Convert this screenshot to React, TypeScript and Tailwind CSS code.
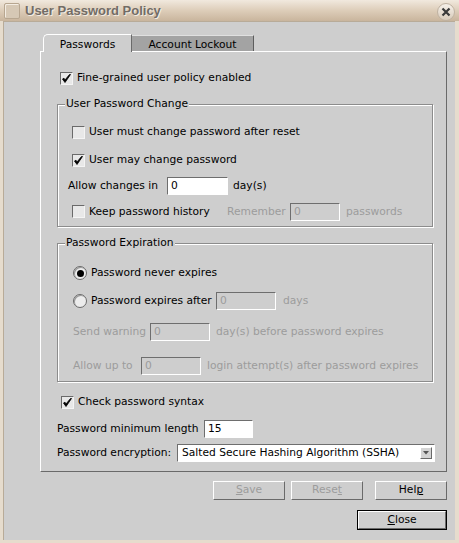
import React from "react";

const Check = ({ checked }: { checked?: boolean }) => (
    <span className="w-[13px] h-[13px] shrink-0 flex items-center justify-center border border-t-[#6a6a6a] border-l-[#6a6a6a] border-b-[#f4f4f4] border-r-[#f4f4f4] bg-[#e8e8e8]">
        {checked && (
            <svg width="9" height="9" viewBox="0 0 9 9">
                <path d="M0.5 5 L3 8.5 L8.5 0.5 L7.5 0.5 L3 6 L2 4.2 Z" fill="#000" stroke="#000" strokeWidth="0.8" strokeLinejoin="round" />
            </svg>
        )}
    </span>
);

const Radio = ({ on }: { on?: boolean }) => (
    <span className="w-[14px] h-[14px] shrink-0 rounded-full flex items-center justify-center border border-[#6a6a6a] bg-[#ececec] shadow-[inset_1px_1px_0_#9a9a9a]">
        {on && <span className="w-[7px] h-[7px] rounded-full bg-black" />}
    </span>
);

const Field = ({ value, disabled, w }: { value: string; disabled?: boolean; w: string }) => (
    <span
        className={
            "h-[18px] flex items-center pl-[3px] border border-t-[#6e6e6e] border-l-[#6e6e6e] border-b-white border-r-white " +
            w +
            (disabled ? " bg-[#cecece] text-[#9c9c9c]" : " bg-white text-black")
        }
    >
        {value}
    </span>
);

const Btn = ({ children, w, disabled, main }: { children: React.ReactNode; w: string; disabled?: boolean; main?: boolean }) => (
    <span className={"flex " + (main ? "border border-black" : "")}>
        <span
            className={
                "flex items-center justify-center border border-t-white border-l-white border-b-[#6a6a6a] border-r-[#6a6a6a] bg-[#cecece] " +
                w +
                (main ? " h-[18px]" : " h-[19px]") +
                (disabled ? " text-[#9c9c9c]" : " text-black")
            }
        >
            {children}
        </span>
    </span>
);

const Group = ({ title, h, children }: { title: string; h: string; children: React.ReactNode }) => (
    <div className={"relative w-[376px] border border-[#8c8c8c] shadow-[inset_1px_1px_0_#fff,1px_1px_0_#fff] " + h}>
        <span className="absolute left-[7px] top-[-8px] bg-[#cecece] px-[1px] leading-[14px]">{title}</span>
        {children}
    </div>
);

export default function App() {
    return (
        <div className="w-[459px] h-[543px] flex flex-col bg-[#e6dccd] font-['DejaVu_Sans',sans-serif] text-[10.7px] text-black overflow-hidden">
            {/* title bar */}
            <div className="h-[21px] shrink-0 flex items-center px-[4px] bg-gradient-to-b from-[#f1e9de] via-[#ddcdb9] to-[#c9b59d]">
                <span className="w-[16px] h-[16px] rounded-[2px] border border-[#b7a690] bg-[#d6c8b5] shadow-[inset_1px_1px_0_#f3ece2]" />
                <span className="ml-[5px] font-['Liberation_Sans',sans-serif] font-bold text-[13px] text-[#726c66] [text-shadow:1px_1px_0_#f3ece3]">
                    User Password Policy
                </span>
                <span className="ml-auto w-[18px] h-[18px] mt-[3px] rounded-full border border-[#bfb2a2] bg-gradient-to-b from-[#f6f1ea] to-[#d8cbbb] flex items-center justify-center">
                    <svg width="10" height="10" viewBox="0 0 10 10">
                        <path d="M1.5 1.5 L8.5 8.5 M8.5 1.5 L1.5 8.5" stroke="#3a3a3a" strokeWidth="2.2" />
                    </svg>
                </span>
            </div>

            {/* body */}
            <div className="flex-1 ml-[3px] mr-[4px] mb-[3px] bg-[#cecece] pl-[37px] pt-[13px] shadow-[inset_1px_1px_0_#b8ab98]">
                {/* tabs */}
                <div className="flex items-end h-[17px]">
                    <div className="relative z-10 w-[89px] h-[18px] mb-[-1px] ml-[3px] flex items-start justify-center pt-[2px] bg-[#cecece] border-l border-t border-white border-r border-r-[#6a6a6a] rounded-tl-[5px]">
                        Passwords
                    </div>
                    <div className="w-[122px] h-[16px] flex items-start justify-center pt-[1px] bg-[#a3a3a3] border-t border-[#e0e0e0] border-r border-r-[#5e5e5e]">
                        Account Lockout
                    </div>
                </div>

                {/* panel */}
                <div className="w-[407px] h-[421px] border border-t-white border-l-white border-r-[#6a6a6a] border-b-[#6a6a6a] pl-[16px] pt-[18px]">
                    <div className="h-[17px] flex items-center ml-[3px]">
                        <Check checked />
                        <span className="ml-[4px]">Fine-grained user policy enabled</span>
                    </div>

                    <div className="mt-[17px]">
                        <Group title="User Password Change" h="h-[123px]">
                            <div className="pl-[10px] pt-[18px]">
                                <div className="h-[18px] flex items-center ml-[4px]">
                                    <Check />
                                    <span className="ml-[4px]">User must change password after reset</span>
                                </div>
                                <div className="h-[18px] mt-[10px] flex items-center ml-[4px]">
                                    <Check checked />
                                    <span className="ml-[4px]">User may change password</span>
                                </div>
                                <div className="h-[18px] mt-[8px] flex items-center">
                                    <span className="w-[99px]">Allow changes in</span>
                                    <Field value="0" w="w-[61px]" />
                                    <span className="ml-[5px]">day(s)</span>
                                </div>
                                <div className="h-[18px] mt-[8px] flex items-center">
                                    <span className="w-[159px] flex items-center pl-[4px]">
                                        <Check />
                                        <span className="ml-[4px]">Keep password history</span>
                                    </span>
                                    <span className="w-[63px] text-[#9c9c9c]">Remember</span>
                                    <Field value="0" disabled w="w-[50px]" />
                                    <span className="ml-[6px] text-[#9c9c9c]">passwords</span>
                                </div>
                            </div>
                        </Group>
                    </div>

                    <div className="mt-[16px]">
                        <Group title="Password Expiration" h="h-[139px]">
                            <div className="pl-[15px] pt-[20px]">
                                <div className="h-[18px] flex items-center">
                                    <Radio on />
                                    <span className="ml-[4px]">Password never expires</span>
                                </div>
                                <div className="h-[18px] mt-[10px] flex items-center">
                                    <Radio />
                                    <span className="ml-[4px] w-[125px]">Password expires after</span>
                                    <Field value="0" disabled w="w-[60px]" />
                                    <span className="ml-[7px] text-[#9c9c9c]">days</span>
                                </div>
                                <div className="h-[18px] mt-[13px] flex items-center text-[#9c9c9c]">
                                    <span className="w-[77px]">Send warning</span>
                                    <Field value="0" disabled w="w-[60px]" />
                                    <span className="ml-[6px]">day(s) before password expires</span>
                                </div>
                                <div className="h-[18px] mt-[16px] flex items-center text-[#9c9c9c]">
                                    <span className="w-[68px]">Allow up to</span>
                                    <Field value="0" disabled w="w-[60px]" />
                                    <span className="ml-[6px]">login attempt(s) after password expires</span>
                                </div>
                            </div>
                        </Group>
                    </div>

                    <div className="h-[18px] mt-[11px] flex items-center ml-[4px]">
                        <Check checked />
                        <span className="ml-[4px]">Check password syntax</span>
                    </div>
                    <div className="h-[18px] mt-[9px] flex items-center">
                        <span className="w-[147px]">Password minimum length</span>
                        <Field value="15" w="w-[49px]" />
                    </div>
                    <div className="h-[18px] mt-[6px] flex items-center">
                        <span className="w-[120px]">Password encryption:</span>
                        <span className="w-[258px] h-[18px] flex items-center pl-[4px] pr-[2px] bg-white border border-t-[#6e6e6e] border-l-[#6e6e6e] border-b-white border-r-white">
                            <span className="flex-1">Salted Secure Hashing Algorithm (SSHA)</span>
                            <span className="w-[12px] h-[12px] flex items-center justify-center bg-[#d4d4d4] border border-t-white border-l-white border-b-[#6a6a6a] border-r-[#6a6a6a]">
                                <svg width="6" height="4" viewBox="0 0 6 4">
                                    <path d="M0 0 L6 0 L3 3.5 Z" fill="#555" />
                                </svg>
                            </span>
                        </span>
                    </div>
                </div>

                {/* buttons */}
                <div className="w-[407px] flex justify-end mt-[9px]">
                    <Btn w="w-[72px]" disabled>
                        <span className="underline">S</span>ave
                    </Btn>
                    <span className="ml-[6px]" />
                    <Btn w="w-[72px]" disabled>
                        Rese<span className="underline">t</span>
                    </Btn>
                    <span className="ml-[12px]" />
                    <Btn w="w-[72px]">
                        Hel<span className="underline">p</span>
                    </Btn>
                </div>
                <div className="w-[407px] flex justify-end mt-[10px]">
                    <Btn w="w-[88px]" main>
                        <span className="underline">C</span>lose
                    </Btn>
                </div>
            </div>
        </div>
    );
}
